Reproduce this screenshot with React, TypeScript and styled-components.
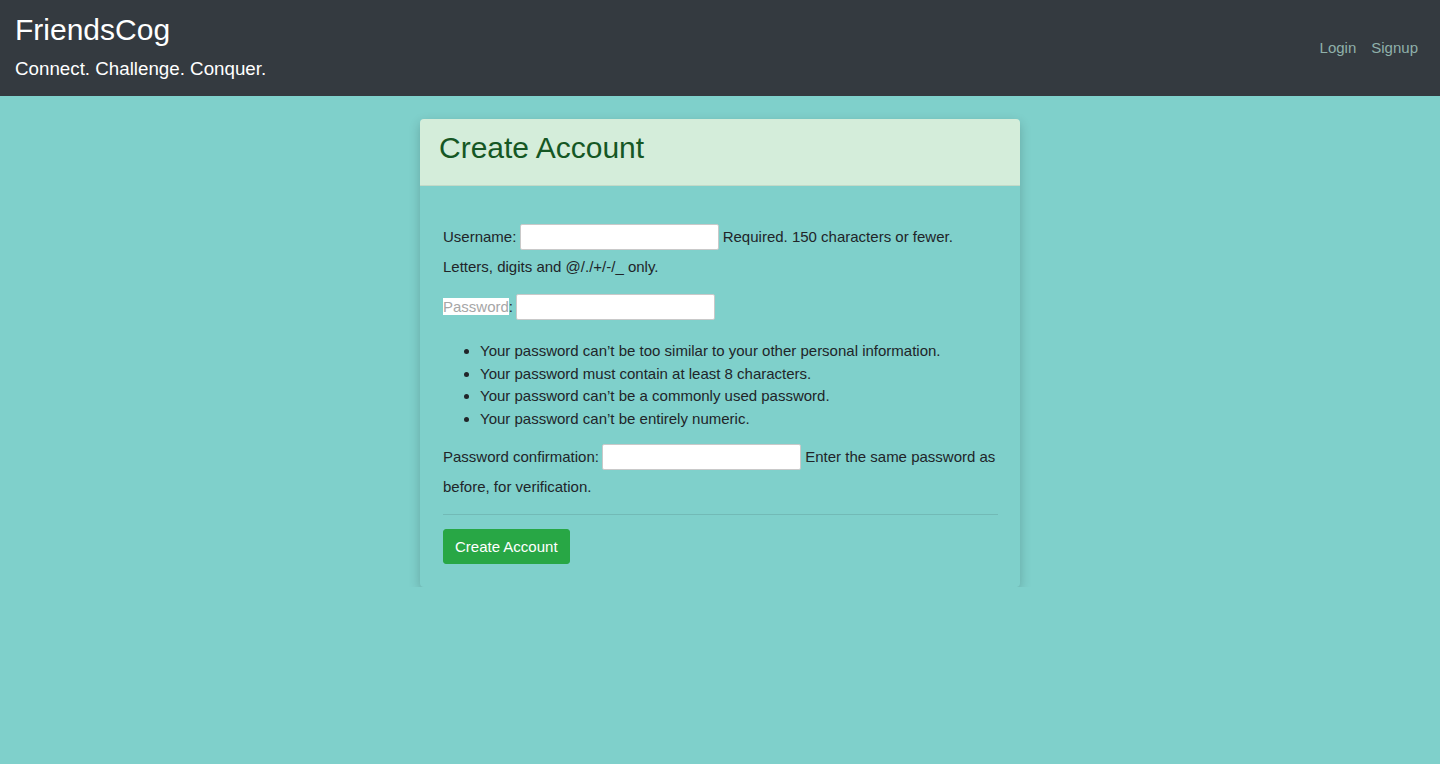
import React from "react";
import styled, { createGlobalStyle } from "styled-components";

const GlobalStyle = createGlobalStyle`
  html, body {
    margin: 0;
    padding: 0;
  }

  body {
    background-color: #7fd0cb;
    font-family: "Liberation Sans", Arial, sans-serif;
    font-size: 15px;
    line-height: 1.5;
    color: #212529;
  }
`;

const Navbar = styled.nav`
  display: flex;
  justify-content: space-between;
  align-items: center;
  height: 96px;
  box-sizing: border-box;
  padding: 0 22px 0 15px;
  background-color: #343a40;
`;

const Brand = styled.div`
  color: #ffffff;
  margin-top: -4px;
`;

const BrandTitle = styled.h1`
  margin: 0;
  font-size: 30px;
  font-weight: 400;
  line-height: 1.2;
`;

const BrandTagline = styled.p`
  margin: 10px 0 0;
  font-size: 18.75px;
  line-height: 1.2;
`;

const NavLinks = styled.div`
  display: flex;
  gap: 15px;
  margin-top: 1px;
`;

const NavLink = styled.a`
  color: #8fb0aa;
  text-decoration: none;
  font-size: 15px;
  cursor: pointer;

  &:hover {
    color: #b7d6d1;
  }
`;

const Main = styled.main`
  display: flex;
  justify-content: center;
  padding-top: 23px;
`;

const Card = styled.div`
  width: 600px;
  border-radius: 4px;
  box-shadow: 0 4px 12px rgba(0, 0, 0, 0.2);
`;

const CardHeader = styled.div`
  background-color: #d4edda;
  color: #155724;
  border-radius: 4px 4px 0 0;
  border-bottom: 1px solid rgba(0, 0, 0, 0.08);
  padding: 11px 19px 19px;
`;

const CardTitle = styled.h2`
  margin: 0;
  font-size: 30px;
  font-weight: 400;
  line-height: 1.2;
`;

const CardBody = styled.div`
  padding: 36px 22px 23px 23px;
`;

const FormRow = styled.p`
  margin: 0 0 10px;
  line-height: 30px;
`;

const TextInput = styled.input`
  width: 199px;
  height: 26px;
  box-sizing: border-box;
  margin: 0 0 0 -1px;
  padding: 1px 4px;
  border: 1px solid #c9c9c9;
  border-radius: 2px;
  background: #ffffff;
  vertical-align: middle;
  position: relative;
  top: -1px;
  font: inherit;
`;

const FadedLabel = styled.span`
  background: #ffffff;
  color: #a6a6a6;
`;

const HelpList = styled.ul`
  margin: 18px 0 12px;
  padding-left: 37px;
  line-height: 22.5px;
`;

const Divider = styled.hr`
  margin: 12px 0 14px;
  border: 0;
  border-top: 1px solid rgba(0, 0, 0, 0.1);
`;

const SubmitButton = styled.button`
  font-family: inherit;
  font-size: 15px;
  line-height: 23px;
  color: #ffffff;
  background-color: #28a745;
  border: 1px solid #28a745;
  border-radius: 3px;
  padding: 5px 11px;
  cursor: pointer;

  &:hover {
    background-color: #218838;
  }
`;

const passwordRules = [
  "Your password can\u2019t be too similar to your other personal information.",
  "Your password must contain at least 8 characters.",
  "Your password can\u2019t be a commonly used password.",
  "Your password can\u2019t be entirely numeric.",
];

const App: React.FC = () => {
  return (
    <>
      <GlobalStyle />
      <Navbar>
        <Brand>
          <BrandTitle>FriendsCog</BrandTitle>
          <BrandTagline>Connect. Challenge. Conquer.</BrandTagline>
        </Brand>
        <NavLinks>
          <NavLink>Login</NavLink>
          <NavLink>Signup</NavLink>
        </NavLinks>
      </Navbar>

      <Main>
        <Card>
          <CardHeader>
            <CardTitle>Create Account</CardTitle>
          </CardHeader>
          <CardBody>
            <form onSubmit={(e) => e.preventDefault()}>
              <FormRow>
                Username: <TextInput type="text" /> Required. 150 characters
                or fewer. Letters, digits and @/./+/-/_ only.
              </FormRow>
              <FormRow>
                <FadedLabel>Password</FadedLabel>: <TextInput type="password" />
              </FormRow>
              <HelpList>
                {passwordRules.map((rule) => (
                  <li key={rule}>{rule}</li>
                ))}
              </HelpList>
              <FormRow>
                Password confirmation: <TextInput type="password" /> Enter the
                same password as before, for verification.
              </FormRow>
              <Divider />
              <SubmitButton type="submit">Create Account</SubmitButton>
            </form>
          </CardBody>
        </Card>
      </Main>
    </>
  );
};

export default App;
